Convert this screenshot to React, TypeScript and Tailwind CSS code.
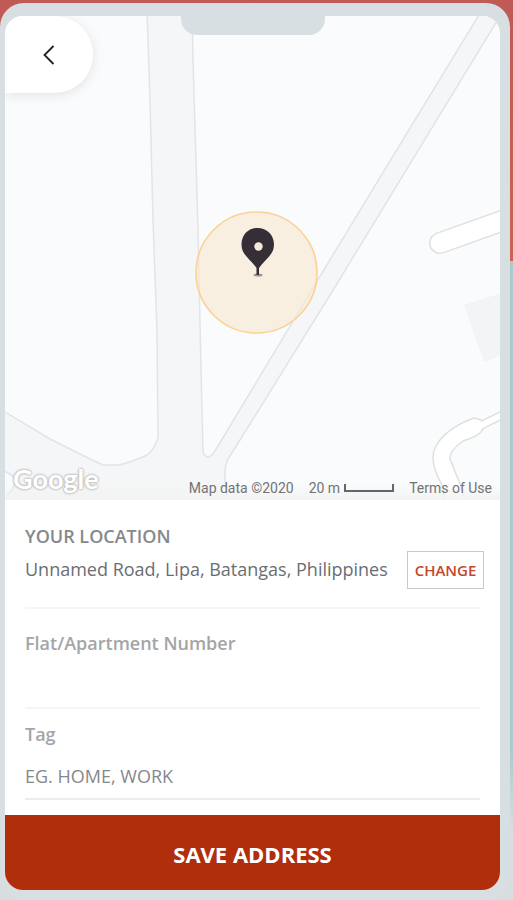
import React from 'react';

const MapView: React.FC = () => {
  return (
    <svg
      viewBox="5 16 495 484"
      preserveAspectRatio="xMidYMid slice"
      className="absolute inset-0 h-full w-full"
      aria-hidden="true"
    >
      <rect x="0" y="0" width="513" height="510" fill="#f9fbfc" />

      {/* Main roads */}
      <g fill="#f5f6f7" stroke="#e3e4e4" strokeWidth="1.5" strokeLinejoin="round">
        <path d="M147 10 L150 100 L153 220 L157 330 L158 438 Q154 450 147 455 Q135 461 119 465 L103 465 L86 457 L50 439 L0 409 V510 H228 L225 478 Q224 468 228 459 L250 424 L335 287 L500 16 V10 H482 L404 138 L325 268 L215 451 Q211 457 208 457 Q203 456 203 450 L201 370 L198 230 L193 60 L192 10 Z" />
        <path d="M3 471 Q20 476 12 490 L3 499" fill="#f9fbfc" />
      </g>

      {/* Side streets */}
      <path d="M510 218 L440 243" fill="none" stroke="#dfe0e0" strokeWidth="22" strokeLinecap="round" />
      <path d="M510 218 L440 243" fill="none" stroke="#fff" strokeWidth="19" strokeLinecap="round" />
      <path d="M480 426 L510 411" fill="none" stroke="#dfe0e0" strokeWidth="9" />
      <path
        d="M442 485 Q429 462 435 448 Q444 429 474 418 L481 420 Q486 427 481 432 Q476 437 463 441 Q449 451 450 459 L460 484 L468 510 H447 Z"
        fill="#fff"
        stroke="#dfe0e0"
        strokeWidth="1.5"
      />
      <path d="M474 429 L510 411" fill="none" stroke="#fff" strokeWidth="6" />

      {/* Building */}
      <path d="M464 305 L505 292 V354 L484 362 Z" fill="#f3f4f5" />

      {/* Accuracy radius */}
      <circle cx="256.5" cy="272.5" r="60.5" fill="#f9e8d2" fillOpacity="0.65" stroke="#fad295" strokeWidth="1.6" />

      {/* Location pin */}
      <ellipse cx="258" cy="275" rx="4.5" ry="1.5" fill="#9c948f" />
      <path
        d="M257.5 228 C248 228 241.5 235 241.5 244.5 C241.5 255 250 258.5 256.5 268 V275 H259 V268 C265.5 258.5 274 255 274 244.5 C274 235 267 228 257.5 228 Z"
        fill="#352e36"
      />
      <circle cx="258.5" cy="246.5" r="4.2" fill="#f7eadd" />
    </svg>
  );
};

const App: React.FC = () => {
  return (
    <div className="min-h-screen bg-[linear-gradient(to_bottom,#c05a56_0,#cd6253_261px,#acc9cd_261px,#acc9cd_750px,#d9dde0_830px)] pt-[3px] pr-[3px] font-['Open_Sans',sans-serif]">
      <main className="flex min-h-[897px] flex-col rounded-[24px] border-t-[13px] border-r-[10px] border-b-[10px] border-l-[5px] border-[#d8dfe2] bg-[#d8dfe2]">
        <div className="flex grow flex-col overflow-hidden rounded-[18px] bg-white">
          {/* Map */}
          <section className="relative h-[484px] overflow-hidden" aria-label="Map">
            <MapView />

            <button
              type="button"
              aria-label="Back"
              className="absolute top-0 left-0 flex h-[77px] w-[88px] items-center justify-center rounded-r-[38px] bg-white shadow-[0_2px_12px_rgba(0,0,0,0.1)]"
            >
              <svg width="12" height="20" viewBox="0 0 12 20" fill="none" stroke="#222" strokeWidth="1.8">
                <path d="M10.5 1 L1.5 10 L10.5 19" />
              </svg>
            </button>

            <div className="absolute top-0 left-1/2 h-[19px] w-36 -translate-x-1/2 rounded-b-2xl bg-[#d8dfe2]" />

            <div className="absolute inset-x-0 bottom-0 flex items-end justify-between bg-linear-to-t from-[#f3f3f3] to-transparent to-40% px-2">
              <span className="font-['Lato',sans-serif] text-[27px] leading-[42px] font-bold text-white [text-shadow:0_0_2px_#bbb,0_0_2px_#bbb,0_0_3px_#bbb]">
                Google
              </span>
              <div className="flex items-center gap-[15px] font-['Roboto',sans-serif] text-[14px] leading-6 text-[#737375]">
                <span>Map data ©2020</span>
                <span className="flex items-center gap-1">
                  20 m
                  <span className="h-2 w-[50px] border-x-2 border-b-2 border-[#666]" />
                </span>
                <a href="#">Terms of Use</a>
              </div>
            </div>
          </section>

          {/* Address form */}
          <form className="flex grow flex-col">
            <div className="grow px-5 pt-6">
              <div className="flex items-end justify-between border-b-2 border-[#f5f5f5] pb-[18px]">
                <div>
                  <h2 className="text-[18px] leading-6 font-semibold text-[#85898c]">YOUR LOCATION</h2>
                  <p className="pt-px text-[18px] leading-10 whitespace-nowrap text-[#6a6e72]">
                    Unnamed Road, Lipa, Batangas, Philippines
                  </p>
                </div>
                <button
                  type="button"
                  className="-mr-1 h-[38px] w-[77px] shrink-0 border border-[#c9c9c9] text-[15px] font-semibold text-[#c2482c]"
                >
                  CHANGE
                </button>
              </div>

              <div className="border-b-2 border-[#f5f5f5] pt-[22px]">
                <label htmlFor="flat" className="block text-[18px] leading-6 font-semibold text-[#a3a5a6]">
                  Flat/Apartment Number
                </label>
                <input id="flat" type="text" className="block h-[52px] w-full text-[18px] text-[#6a6e72] outline-none" />
              </div>

              <div className="border-b-2 border-[#ededed] pt-[13px]">
                <label htmlFor="tag" className="block text-[18px] leading-6 font-semibold text-[#a3a5a6]">
                  Tag
                </label>
                <input
                  id="tag"
                  type="text"
                  placeholder="EG. HOME, WORK"
                  className="mt-2 block h-11 w-full text-[18px] text-[#6a6e72] outline-none placeholder:text-[#85898c]"
                />
              </div>
            </div>

            <button type="submit" className="h-[75px] w-full bg-[#b02e0c] pt-1 text-[22px] font-bold text-white">
              SAVE ADDRESS
            </button>
          </form>
        </div>
      </main>
    </div>
  );
};

export default App;
